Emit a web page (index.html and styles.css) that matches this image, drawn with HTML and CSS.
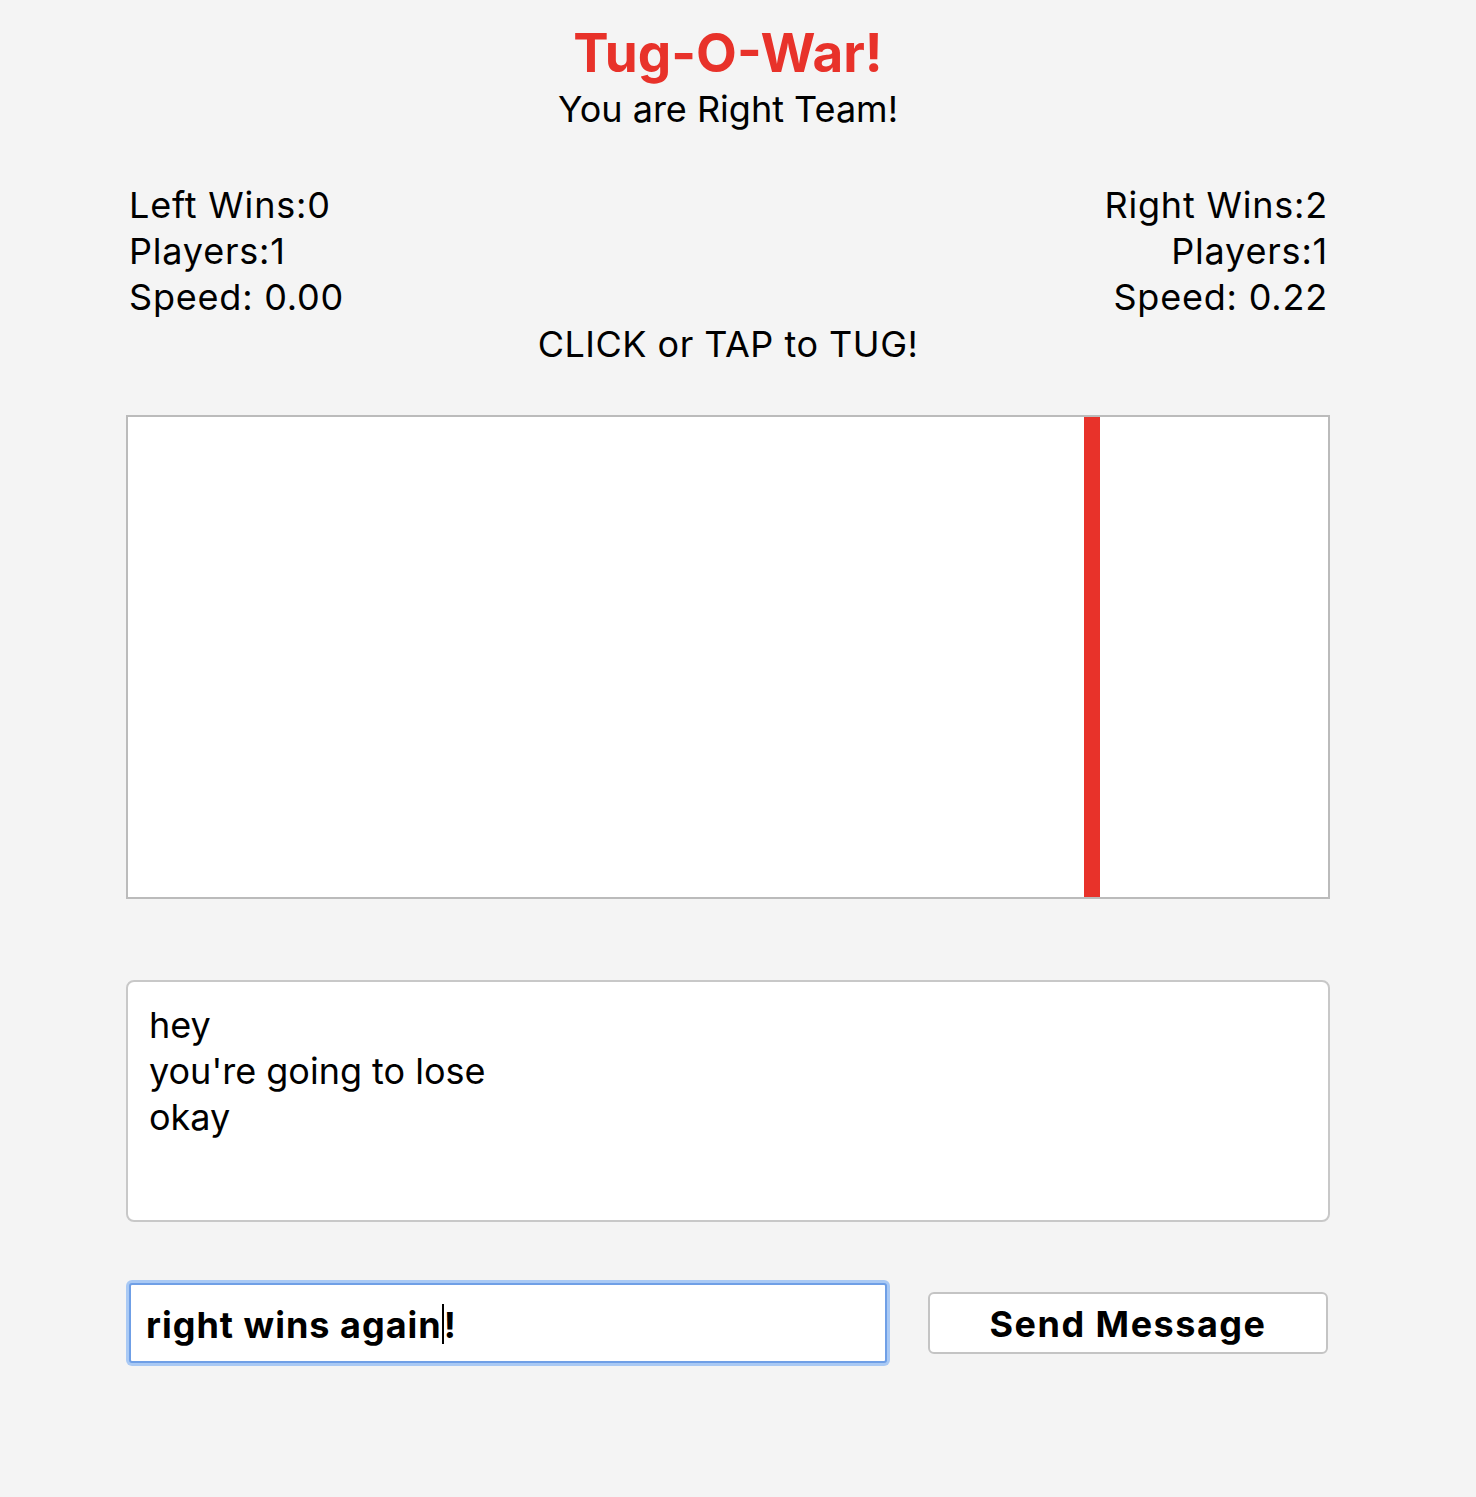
FILE: index.html
```html
<!DOCTYPE html>
<html>
<head>
<meta charset="utf-8">
<title>Tug-O-War!</title>
<link rel="stylesheet" href="styles.css">
</head>
<body>
<div class="page">
  <h1 class="title">Tug-O-War!</h1>
  <div class="subtitle">You are Right Team!</div>
  <div class="stats">
    <div class="team left">
      <div>Left Wins:0</div>
      <div>Players:1</div>
      <div>Speed: 0.00</div>
    </div>
    <div class="team right">
      <div>Right Wins:2</div>
      <div>Players:1</div>
      <div>Speed: 0.22</div>
    </div>
  </div>
  <div class="hint">CLICK or TAP to TUG!</div>
  <div class="field">
    <div class="rope"></div>
  </div>
  <div class="chat">
    <div>hey</div>
    <div>you're going to lose</div>
    <div>okay</div>
  </div>
  <div class="send-row">
    <div class="msg-input">right wins again<span class="caret"></span>!</div>
    <button class="send-btn">Send Message</button>
  </div>
</div>
</body>
</html>
```

FILE: styles.css
```css
html, body {
  margin: 0;
  padding: 0;
  background: #f4f4f4;
}
body {
  font-family: Inter, "Noto Sans", "Liberation Sans", sans-serif;
  color: #000;
}
.page {
  width: 1204px;
  margin-left: 126px;
  padding-bottom: 100px;
}
.title {
  margin: 23px 0 0;
  font-size: 53px;
  line-height: 60px;
  font-weight: 700;
  color: #e8322a;
  text-align: center;
}
.subtitle {
  margin-top: 3px;
  font-size: 36px;
  line-height: 46px;
  text-align: center;
}
.stats {
  margin-top: 50px;
  display: flex;
  justify-content: space-between;
  font-size: 36px;
  line-height: 46px;
  letter-spacing: 0.8px;
  padding: 0 2px 0 3px;
}
.team.right {
  text-align: right;
}
.hint {
  margin-top: 1px;
  font-size: 36px;
  line-height: 46px;
  letter-spacing: 0.5px;
  text-align: center;
}
.field {
  margin-top: 48px;
  height: 480px;
  border: 2px solid #bbbbbb;
  background: #fff;
  position: relative;
}
.rope {
  position: absolute;
  top: 0;
  bottom: 0;
  left: 956px;
  width: 16px;
  background: #e8322a;
}
.chat {
  margin-top: 81px;
  height: 198px;
  border: 2px solid #c8c8c8;
  border-radius: 8px;
  background: #fff;
  padding: 20px 21px;
  font-size: 36px;
  line-height: 46px;
  overflow: hidden;
}
.send-row {
  margin-top: 61px;
  display: flex;
  align-items: center;
  justify-content: space-between;
}
.msg-input {
  box-sizing: border-box;
  width: 758px;
  height: 80px;
  margin-left: 3px;
  border: 2px solid #6f9fe6;
  border-radius: 3px;
  box-shadow: 0 0 0 3px #a9c9f4;
  background: #fff;
  padding: 2px 15px 0;
  font-size: 36px;
  font-weight: 700;
  letter-spacing: 1px;
  line-height: 76px;
}
.caret {
  display: inline-block;
  width: 0;
  height: 40px;
  border-left: 2px solid #000;
  vertical-align: -6px;
}
.send-btn {
  box-sizing: border-box;
  width: 400px;
  height: 62px;
  margin-right: 2px;
  border: 2px solid #c4c4c4;
  border-radius: 6px;
  background: #fff;
  font-family: Inter, "Noto Sans", "Liberation Sans", sans-serif;
  font-size: 36px;
  font-weight: 700;
  letter-spacing: 1.5px;
  color: #000;
  padding: 2px 0 0;
}
```
